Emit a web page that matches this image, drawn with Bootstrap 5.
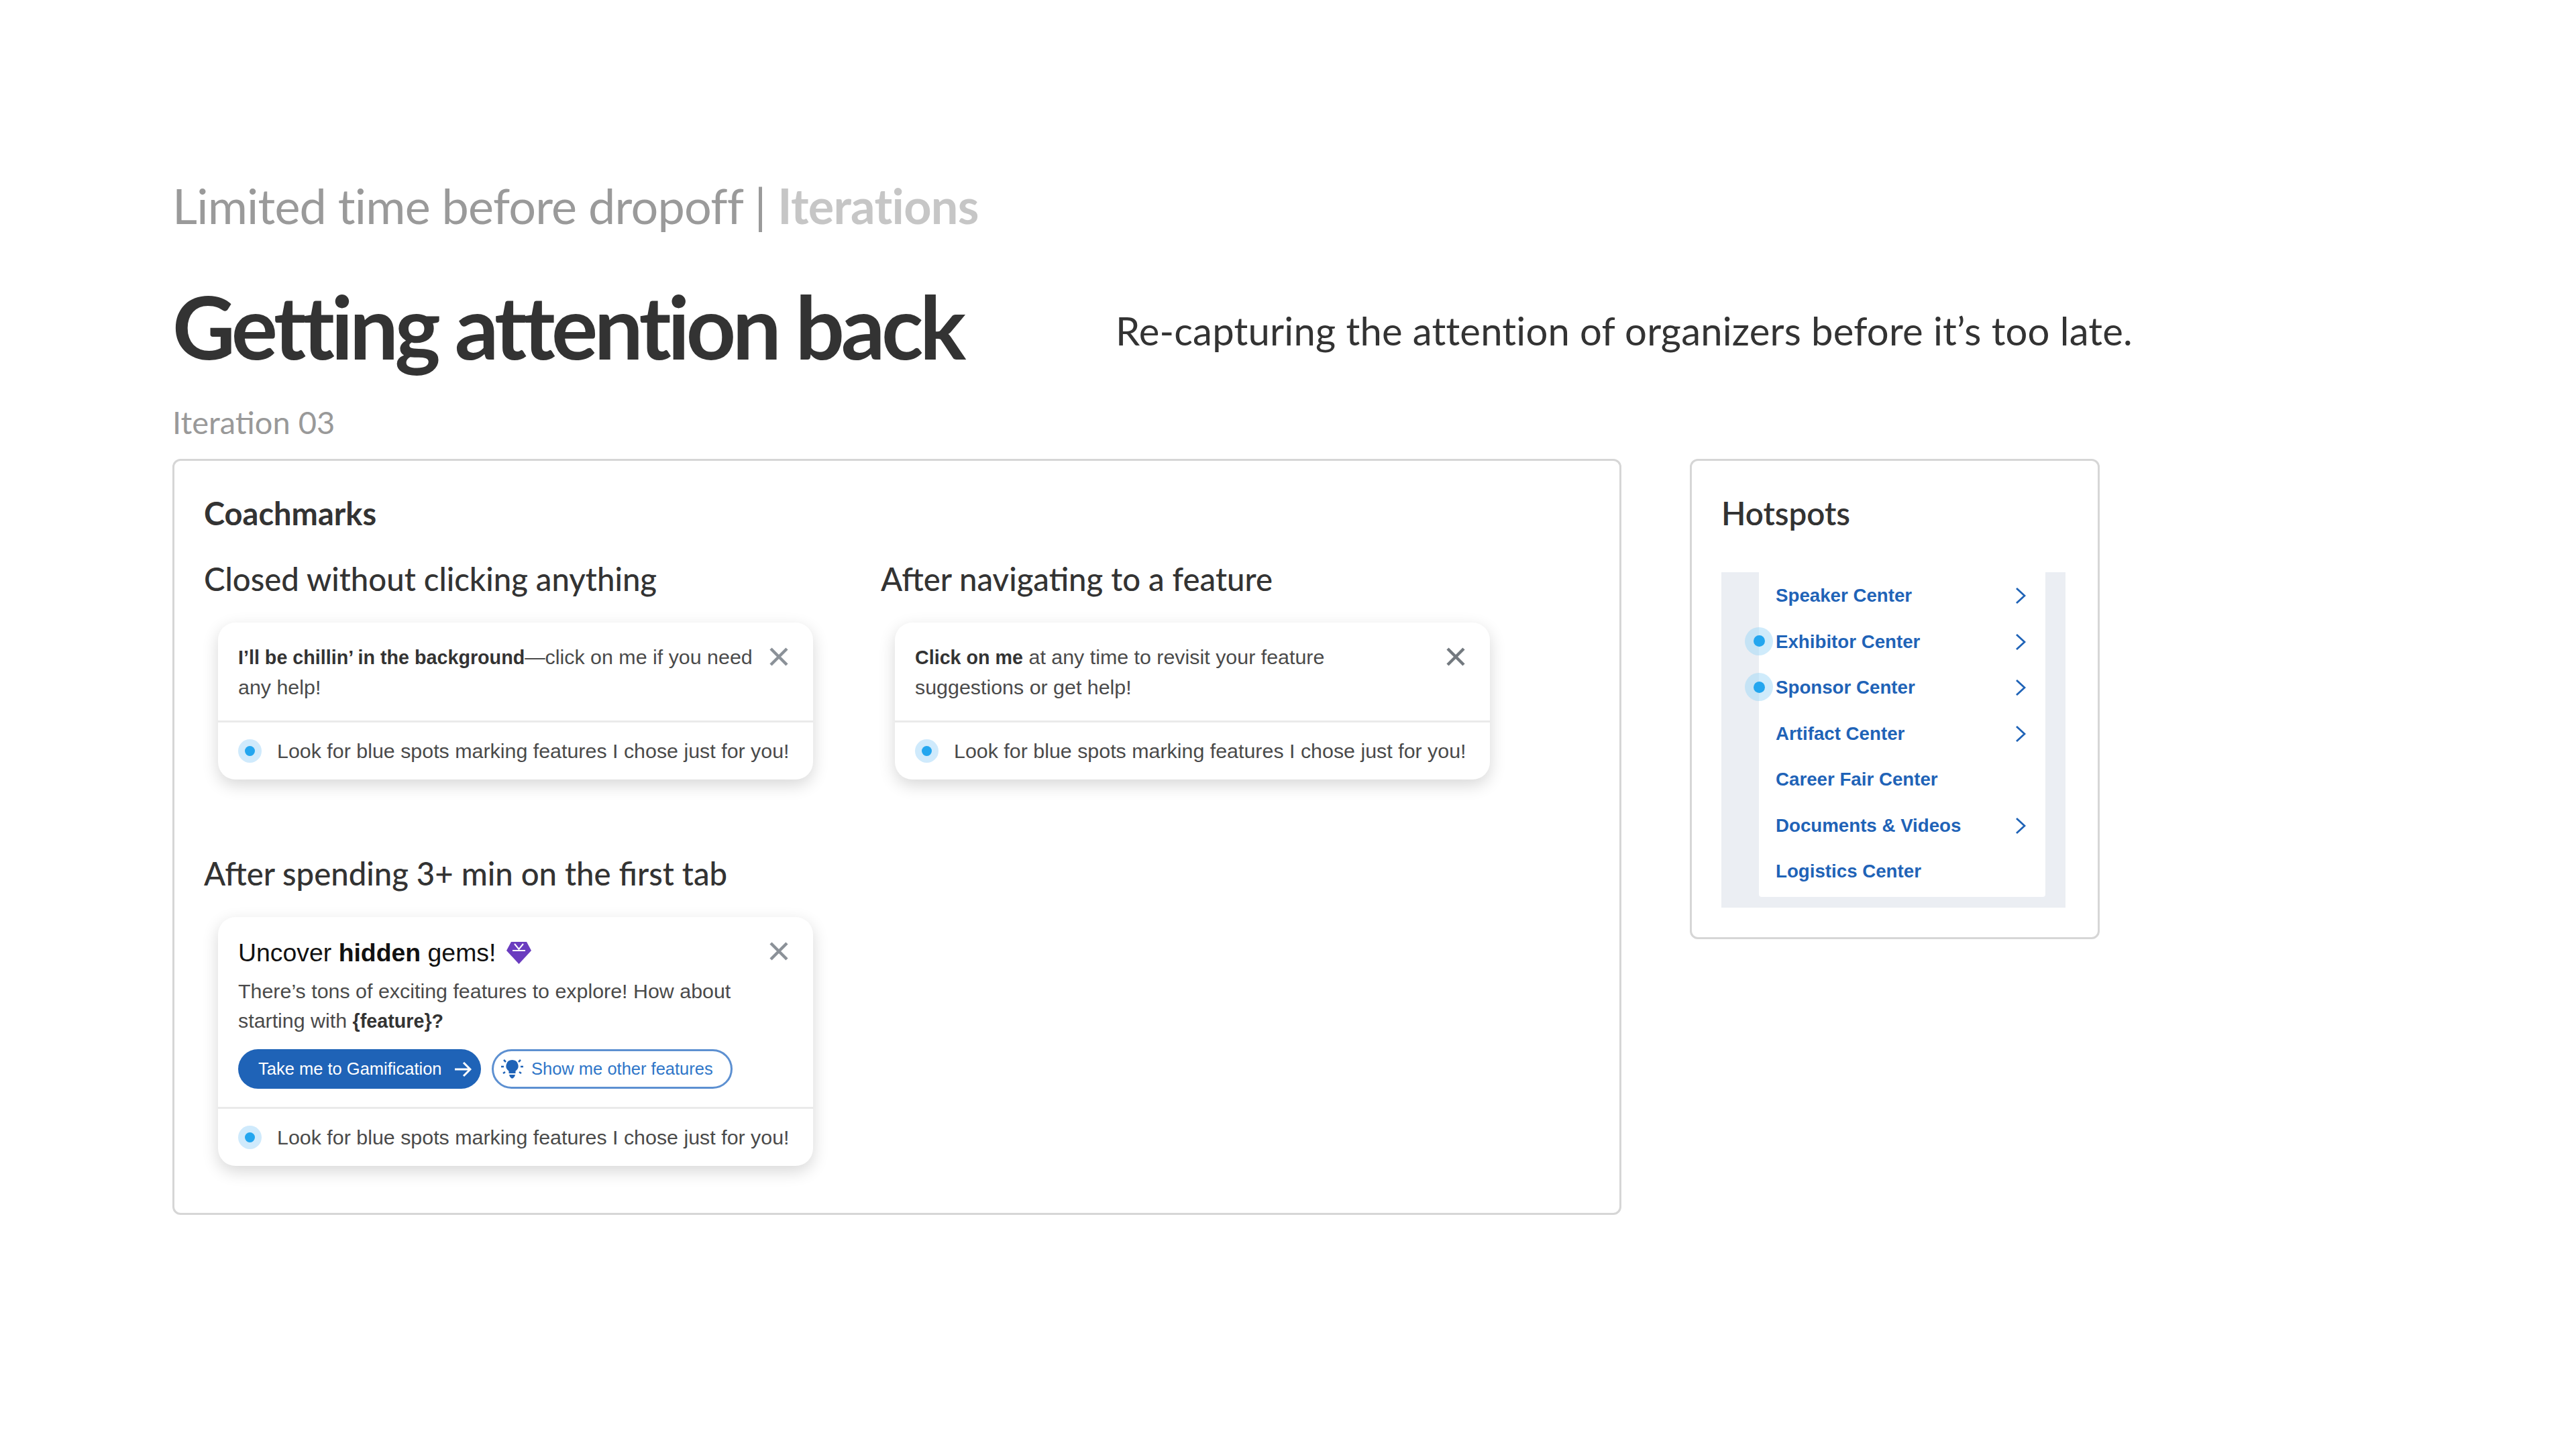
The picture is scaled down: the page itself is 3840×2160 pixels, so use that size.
<!DOCTYPE html>
<html lang="en">
<head>
<meta charset="utf-8">
<title>Getting attention back</title>
<link href="https://cdn.jsdelivr.net/npm/bootstrap@5.3.0/dist/css/bootstrap.min.css" rel="stylesheet">
<style>
body{background:#fff;font-family:"Lato","Liberation Sans",sans-serif;color:#333;height:2160px;overflow:hidden}
.slide{padding:260px 0 0 257px}
.crumb{font-size:72px;line-height:92px;color:#9a9a9a;font-weight:400;letter-spacing:-.8px;margin:0}
.crumb span{color:#c6c6c6;font-weight:700;letter-spacing:-.7px}
.headline{height:190px;margin-top:45px;margin-bottom:12px}
.headline h1{font-size:129.500px;font-weight:700;letter-spacing:-5.400px;color:#333;width:1406px;margin:0;padding-bottom:10px;flex:none}
.headline p{font-size:58px;margin:0;color:#333;letter-spacing:.2px}
.iter{font-size:47px;line-height:60px;color:#999;margin:0 0 25px}
.panel{border:3px solid #d6d6d6;border-radius:12px;background:#fff}
.panel-a{width:2160px;height:1127px;padding:46px 44px}
.panel-b{width:611px;height:716px;padding:46px 48px 46px 44px;margin-left:102px}
.panel h2{font-size:47px;line-height:64px;font-weight:700;color:#333;margin:0}
.panel-b h2{font-size:47.500px;font-weight:600}
.two-col{display:grid;grid-template-columns:1009px 1fr;margin-top:34px}
.sub{font-size:47.300px;line-height:64px;color:#333;margin:0}
.tip{width:887px;background:#fff;border-radius:26px;box-shadow:0 8px 24px rgba(0,0,0,.16);margin:33px 0 0 21px;font-family:"Liberation Sans",Arial,sans-serif;font-size:30.400px;color:#4a4a4a}
.tip-main{padding:29px 30px 0;position:relative}
.short{height:146px}
.tall{height:283px;padding-top:30px}
.tip-text{line-height:44px;margin:0;width:800px}
.tip-text b{color:#333;font-weight:700;font-size:28.700px}
.x{position:absolute;right:37px;top:37px;width:28px;height:28px}
.tip-foot{border-top:3px solid #eaeaea;height:88px;padding-left:30px;gap:23px}
.halo{width:35px;height:35px;border-radius:50%;background:#cfeafc;flex:none}
.core{width:15px;height:15px;border-radius:50%;background:#23a6ef}
.tip-title{font-size:37.400px;line-height:46px;color:#111;margin:0 0 12px;gap:16px}
.tip-title b{font-weight:700}
.pill{height:59px;border-radius:30px;font-size:25.500px;margin-top:20px}
.pill-a{background:#1f63b7;color:#fff;width:362px;padding-left:30px;gap:18px}
.pill-b{border:3px solid #5d90d1;color:#2f76c8;width:359px;margin-left:16px;padding-left:10px;gap:11px}
.gap-row{margin-top:108px}
.menu-bg{background:#ebeef3;height:500px;margin-top:56px;padding:0 30px 16px 56px;position:relative}
.menu{background:#fff;height:100%;border-radius:0 0 4px 4px;padding:1px 0 0 25px;font-family:"Liberation Sans",Arial,sans-serif;font-weight:700;font-size:27.700px;color:#1f63b7;list-style:none;margin:0}
.menu li{height:68.500px;padding-right:29px;position:relative}
.chev{width:16px;height:24px}
.spot{position:absolute;left:-46px;top:12px;width:42px;height:42px;border-radius:50%;background:rgba(160,215,248,.5)}
.spot .core{width:17px;height:17px}
</style>
</head>
<body>
<main class="slide">
  <p class="crumb">Limited time before dropoff | <span>Iterations</span></p>
  <div class="headline d-flex align-items-center">
    <h1>Getting attention back</h1>
    <p>Re-capturing the attention of organizers before it’s too late.</p>
  </div>
  <p class="iter">Iteration 03</p>
  <div class="d-flex align-items-start">
    <section class="panel panel-a">
      <h2>Coachmarks</h2>
      <div class="two-col">
        <div>
          <h3 class="sub">Closed without clicking anything</h3>
          <div class="tip">
            <div class="tip-main short">
              <p class="tip-text"><b>I’ll be chillin’ in the background</b>—click on me if you need<br>any help!</p>
              <svg class="x" viewBox="0 0 28 28"><path d="M2 2 26 26M26 2 2 26" stroke="#8b9198" stroke-width="4.500" fill="none"/></svg>
            </div>
            <div class="tip-foot d-flex align-items-center"><span class="halo d-flex align-items-center justify-content-center"><span class="core"></span></span><span>Look for blue spots marking features I chose just for you!</span></div>
          </div>
        </div>
        <div>
          <h3 class="sub">After navigating to a feature</h3>
          <div class="tip">
            <div class="tip-main short">
              <p class="tip-text"><b>Click on me</b> at any time to revisit your feature<br>suggestions or get help!</p>
              <svg class="x" viewBox="0 0 28 28"><path d="M2 2 26 26M26 2 2 26" stroke="#73797f" stroke-width="4.500" fill="none"/></svg>
            </div>
            <div class="tip-foot d-flex align-items-center"><span class="halo d-flex align-items-center justify-content-center"><span class="core"></span></span><span>Look for blue spots marking features I chose just for you!</span></div>
          </div>
        </div>
      </div>
      <div class="gap-row">
        <h3 class="sub">After spending 3+ min on the first tab</h3>
        <div class="tip">
          <div class="tip-main tall">
            <p class="tip-title d-flex align-items-center"><span>Uncover <b>hidden</b> gems!</span>
              <svg width="37" height="34" viewBox="0 0 37 34"><path d="M7 1H30L37 14 18.500 34 0 14Z" fill="#6a3cbf"/><path d="M9 14H28M12 4 18.500 12 25 4" stroke="#fff" stroke-width="2" fill="none"/></svg></p>
            <p class="tip-text w-100 mb-0">There’s tons of exciting features to explore! How about<br>starting with <b>{feature}?</b></p>
            <svg class="x" viewBox="0 0 28 28"><path d="M2 2 26 26M26 2 2 26" stroke="#8b9198" stroke-width="4.500" fill="none"/></svg>
            <div class="d-flex">
              <span class="pill pill-a d-flex align-items-center">Take me to Gamification
                <svg width="26" height="24" viewBox="0 0 26 24"><path d="M1 12H24M14 2 24 12 14 22" stroke="#fff" stroke-width="3" fill="none"/></svg></span>
              <span class="pill pill-b d-flex align-items-center">
                <svg width="35" height="31" viewBox="0 0 35 31"><path d="M17.500 2a9 9 0 0 0-5 16.500V22h10v-3.500a9 9 0 0 0-5-16.500ZM13 24h9l-1 3-2.500 2.500h-2L14 27Z" fill="#1f63b7"/><path d="M5 2 8 5M30 2 27 5M1 12H5M30 12H34M4 22 7 20M31 22 28 20" stroke="#1f63b7" stroke-width="2.500" fill="none"/></svg>
                Show me other features</span>
            </div>
          </div>
          <div class="tip-foot d-flex align-items-center"><span class="halo d-flex align-items-center justify-content-center"><span class="core"></span></span><span>Look for blue spots marking features I chose just for you!</span></div>
        </div>
      </div>
    </section>
    <section class="panel panel-b">
      <h2>Hotspots</h2>
      <div class="menu-bg">
        <ul class="menu">
          <li class="d-flex align-items-center justify-content-between"><span>Speaker Center</span><svg class="chev" viewBox="0 0 16 24"><path d="M2 1 14 12 2 23" stroke="#1f63b7" stroke-width="2.800" fill="none"/></svg></li>
          <li class="d-flex align-items-center justify-content-between"><i class="spot d-flex align-items-center justify-content-center"><b class="core"></b></i><span>Exhibitor Center</span><svg class="chev" viewBox="0 0 16 24"><path d="M2 1 14 12 2 23" stroke="#1f63b7" stroke-width="2.800" fill="none"/></svg></li>
          <li class="d-flex align-items-center justify-content-between"><i class="spot d-flex align-items-center justify-content-center"><b class="core"></b></i><span>Sponsor Center</span><svg class="chev" viewBox="0 0 16 24"><path d="M2 1 14 12 2 23" stroke="#1f63b7" stroke-width="2.800" fill="none"/></svg></li>
          <li class="d-flex align-items-center justify-content-between"><span>Artifact Center</span><svg class="chev" viewBox="0 0 16 24"><path d="M2 1 14 12 2 23" stroke="#1f63b7" stroke-width="2.800" fill="none"/></svg></li>
          <li class="d-flex align-items-center justify-content-between"><span>Career Fair Center</span></li>
          <li class="d-flex align-items-center justify-content-between"><span>Documents &amp; Videos</span><svg class="chev" viewBox="0 0 16 24"><path d="M2 1 14 12 2 23" stroke="#1f63b7" stroke-width="2.800" fill="none"/></svg></li>
          <li class="d-flex align-items-center justify-content-between"><span>Logistics Center</span></li>
        </ul>
      </div>
    </section>
  </div>
</main>
<script src="https://cdn.jsdelivr.net/npm/bootstrap@5.3.0/dist/js/bootstrap.bundle.min.js"></script>
</body>
</html>
